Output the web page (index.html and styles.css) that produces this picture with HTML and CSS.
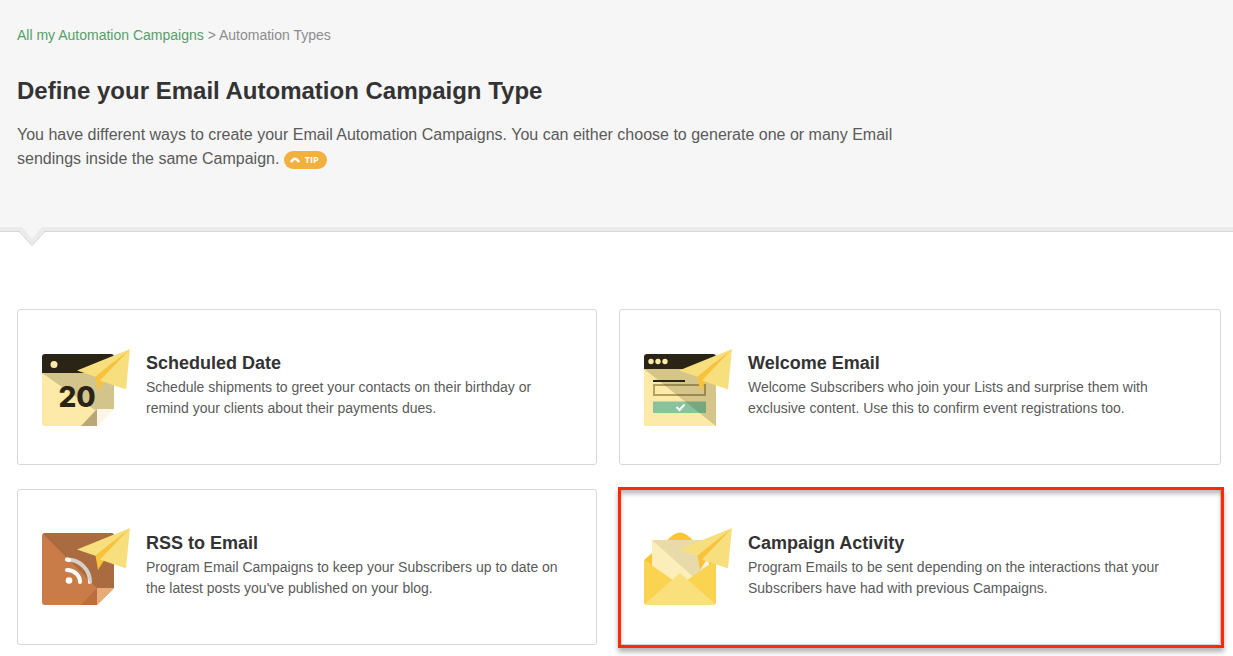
FILE: index.html
```
<!DOCTYPE html>
<html lang="en">
<head>
    <meta charset="UTF-8">
    <meta name="viewport" content="width=device-width, initial-scale=1.0">
    <title>Automation Types</title>
    <link rel="stylesheet" href="styles.css">
</head>
<body>
    <svg class="defs" width="0" height="0" aria-hidden="true">
        <symbol id="plane" viewBox="0 0 90 79">
            <path d="M88 1 35 22.500 54 29Z" fill="#f7df7d"/>
            <path d="M88 1 53.500 28.500 56 43 62 33.500Z" fill="#f9c23c"/>
            <path d="M88 1 58 32.500 84 41.500Z" fill="#f7df7d"/>
        </symbol>
    </svg>

    <header class="page-header">
        <nav class="breadcrumb">
            <a href="#">All my Automation Campaigns</a> &gt; <span>Automation Types</span>
        </nav>
        <h1>Define your Email Automation Campaign Type</h1>
        <div class="intro">
            <span>You have different ways to create your Email Automation Campaigns. You can either choose to generate one or many Email sendings inside the same Campaign.</span>
            <button type="button" class="tip">
                <svg width="10" height="6" viewBox="0 0 10 6" aria-hidden="true"><path d="M1 5Q5-1.500 9 5" fill="none" stroke="#fff" stroke-width="2.400"/></svg>
                TIP
            </button>
        </div>
        <svg class="arrow" width="28" height="20" viewBox="0 0 28 20" aria-hidden="true">
            <path d="M0 0H28V3.500H27L14 18.500 1 3.500H0Z" fill="#ebebeb"/>
            <path d="M1 4.500 14 18.500 27 4.500" fill="none" stroke="#d6d6d6"/>
            <path d="M4 0H24L14 12Z" fill="#f6f6f6"/>
        </svg>
    </header>

    <main class="types">
        <a class="card" href="#">
            <svg class="icon" width="90" height="79" viewBox="0 0 90 79" aria-hidden="true">
                <path d="M0 25H72V61L55 78H3Q0 78 0 75Z" fill="#fdeaa8"/>
                <path d="M0 25H72V61H55L53 62Z" fill="#d3c48b"/>
                <path d="M39 78 55 61V78Z" fill="#b9a778"/>
                <path d="M55 61H72L55 78Z" fill="#fdf5e8"/>
                <path d="M0 25V9Q0 6 3 6H69Q72 6 72 9V25Z" fill="#2a2416"/>
                <circle cx="12" cy="16.500" r="3.500" fill="#fdeaa8"/>
                <text class="day" x="35" y="59" text-anchor="middle">20</text>
                <use href="#plane"/>
            </svg>
            <div class="card-text">
                <h2>Scheduled Date</h2>
                <p>Schedule shipments to greet your contacts on their birthday or remind your clients about their payments dues.</p>
            </div>
        </a>

        <a class="card" href="#">
            <svg class="icon" width="90" height="79" viewBox="0 0 90 79" aria-hidden="true">
                <path d="M0 21H72V78H0Z" fill="#fdeaa8"/>
                <path d="M10 37H61V47H10Z" fill="none" stroke="#b59f60" stroke-width="2"/>
                <path d="M9 53.500H62V65H9Z" fill="#88c39b"/>
                <path d="M0 21H72V78Z" fill="#3b3110" opacity=".2"/>
                <path d="M9 32H41V34H9Z" fill="#2a2416"/>
                <path d="M0 21V9Q0 6 3 6H69Q72 6 72 9V21Z" fill="#2a2416"/>
                <g fill="#fdeaa8">
                    <circle cx="7" cy="13.500" r="2.700"/>
                    <circle cx="14" cy="13.500" r="2.700"/>
                    <circle cx="21" cy="13.500" r="2.700"/>
                </g>
                <path d="M32.500 59 35.500 62 40.500 56.500" fill="none" stroke="#fff" stroke-width="2"/>
                <use href="#plane"/>
            </svg>
            <div class="card-text">
                <h2>Welcome Email</h2>
                <p>Welcome Subscribers who join your Lists and surprise them with exclusive content. Use this to confirm event registrations too.</p>
            </div>
        </a>

        <a class="card" href="#">
            <svg class="icon" width="90" height="79" viewBox="0 1 90 79" aria-hidden="true">
                <path d="M3 6H69Q72 6 72 9V61L55 78H3Q0 78 0 75V9Q0 6 3 6Z" fill="#c97c48"/>
                <path d="M1 7 3 6H69Q72 6 72 9V61H55Z" fill="#aa6b40"/>
                <path d="M39 78 55 61V78Z" fill="#bb6f40"/>
                <path d="M55 61H72L55 78Z" fill="#e8ab78"/>
                <circle cx="27" cy="53.500" r="3.300" fill="#fff"/>
                <g fill="none" stroke-width="4" stroke-linecap="round">
                    <path d="M25 43A13 12 0 0 1 38 55" stroke="#fff"/>
                    <path d="M25 32.500A23 22.500 0 0 1 48 55" stroke="#d6d0c9"/>
                    <path d="M25 32.500 27 33" stroke="#fff"/>
                </g>
                <path d="M46 52V55Q46 57 48 57Z" fill="#fff"/>
                <use href="#plane" width="90" height="79"/>
            </svg>
            <div class="card-text">
                <h2>RSS to Email</h2>
                <p>Program Email Campaigns to keep your Subscribers up to date on the latest posts you've published on your blog.</p>
            </div>
        </a>

        <a class="card highlighted" href="#">
            <svg class="icon" width="90" height="79" viewBox="0 1 90 79" aria-hidden="true">
                <path d="M0 33 29 8Q36 3 43 8L72 33 36 60Z" fill="#f8c632"/>
                <path d="M8 13H65V60H8Z" fill="#fbeebb"/>
                <path d="M8 13H65V46L54 54Z" fill="#e8dba9"/>
                <path d="M56 43 62 33.500 65 35V38Z" fill="#f7f1dd"/>
                <path d="M0 33 36 58 72 33V75Q72 78 69 78H3Q0 78 0 75Z" fill="#fad450"/>
                <path d="M1 77 36 46 71 77 69 78H3Z" fill="#fae07d"/>
                <use href="#plane" width="90" height="79"/>
            </svg>
            <div class="card-text">
                <h2>Campaign Activity</h2>
                <p>Program Emails to be sent depending on the interactions that your Subscribers have had with previous Campaigns.</p>
            </div>
        </a>
    </main>
</body>
</html>
```
FILE: styles.css
```
* {
    box-sizing: border-box;
}
body {
    margin: 0;
    background: #fff;
    color: #5a5a5a;
    font-family: "Liberation Sans", Arial, Helvetica, sans-serif;
    font-size: 14px;
}
h1, h2, p {
    margin: 0;
}
.defs {
    position: absolute;
}
.page-header {
    position: relative;
    padding: 24px 17px 60px;
    background: #f6f6f6;
    border-bottom: 1px solid #d6d6d6;
    box-shadow: inset 0 -4px #ebebeb;
}
.breadcrumb {
    line-height: 22px;
    color: #8c8c8c;
}
.breadcrumb a {
    color: #55a069;
    text-decoration: none;
}
h1 {
    margin-top: 28px;
    color: #333;
    font-size: 24px;
    line-height: 34px;
}
.intro {
    max-width: 920px;
    margin-top: 15px;
    font-size: 16px;
    line-height: 24px;
}
.tip {
    display: inline-flex;
    align-items: center;
    gap: 5px;
    height: 18px;
    padding: 0 8px 0 6px;
    border: 0;
    border-radius: 9px;
    background: #f2b03e;
    color: #fff;
    font-family: "Open Sans", sans-serif;
    font-size: 9px;
    font-weight: bold;
    vertical-align: middle;
}
.arrow {
    position: absolute;
    left: 18px;
    bottom: -16px;
}
.types {
    display: grid;
    grid-template-columns: 580fr 602fr;
    gap: 24px 22px;
    padding: 77px 12px 11px 17px;
}
.card {
    position: relative;
    display: flex;
    gap: 14px;
    padding: 38px 24px 37px;
    border: 1px solid #d8d8d8;
    border-radius: 3px;
    color: #5a5a5a;
    text-decoration: none;
}
.icon {
    flex: none;
}
.card-text {
    max-width: 440px;
}
.card h2 {
    margin: 2px 0 1px;
    color: #333;
    font-size: 18px;
    line-height: 26px;
}
.card p {
    line-height: 21px;
}
.day {
    fill: #2a2416;
    font-family: Inter, sans-serif;
    font-size: 28px;
    font-weight: 800;
}
.highlighted::after {
    content: "";
    position: absolute;
    inset: -3px -4px -4px -2px;
    border: 3px solid #ff2a00;
    box-shadow: 0 4px 5px rgba(0, 0, 0, 0.3), inset 0 4px 4px rgba(0, 0, 0, 0.25);
}
```
